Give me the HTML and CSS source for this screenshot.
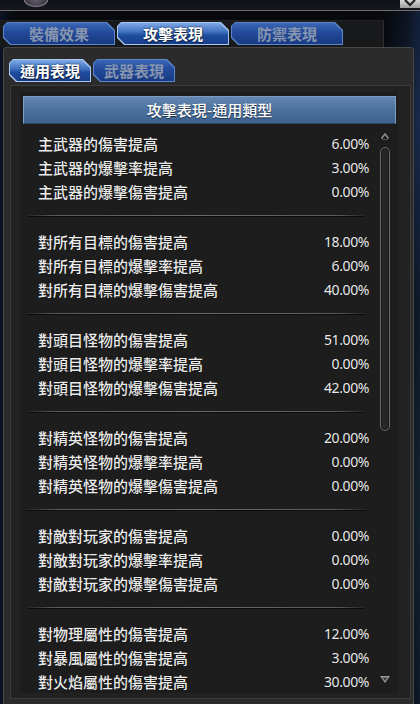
FILE: index.html
```html
<!DOCTYPE html>
<html lang="zh-Hant">
<head>
<meta charset="utf-8">
<title>攻擊表現</title>
<link rel="stylesheet" href="styles.css">
</head>
<body>
<div class="screen">
  <div class="topstrip">
    <div class="orb"></div>
    <div class="closebtn"><svg width="20" height="9" viewBox="0 0 20 9"><path d="M5 0 L10 5 L15 0" stroke="#222" stroke-width="2.2" fill="none"/></svg></div>
  </div>
  <div class="tabbar">
    <div class="tab"><span>裝備效果</span></div>
    <div class="tab active"><span>攻擊表現</span></div>
    <div class="tab"><span>防禦表現</span></div>
  </div>
  <div class="panel">
    <div class="subtabs">
      <div class="tab sub active"><span>通用表現</span></div>
      <div class="tab sub"><span>武器表現</span></div>
    </div>
    <div class="inner">
      <div class="column">
        <div class="header">攻擊表現-通用類型</div>
        <div class="listwrap">
          <div class="list">
            <div class="group">
              <div class="row"><span>主武器的傷害提高</span><span class="val">6.00%</span></div>
              <div class="row"><span>主武器的爆擊率提高</span><span class="val">3.00%</span></div>
              <div class="row"><span>主武器的爆擊傷害提高</span><span class="val">0.00%</span></div>
            </div>
            <div class="sep"></div>
            <div class="group">
              <div class="row"><span>對所有目標的傷害提高</span><span class="val">18.00%</span></div>
              <div class="row"><span>對所有目標的爆擊率提高</span><span class="val">6.00%</span></div>
              <div class="row"><span>對所有目標的爆擊傷害提高</span><span class="val">40.00%</span></div>
            </div>
            <div class="sep"></div>
            <div class="group">
              <div class="row"><span>對頭目怪物的傷害提高</span><span class="val">51.00%</span></div>
              <div class="row"><span>對頭目怪物的爆擊率提高</span><span class="val">0.00%</span></div>
              <div class="row"><span>對頭目怪物的爆擊傷害提高</span><span class="val">42.00%</span></div>
            </div>
            <div class="sep"></div>
            <div class="group">
              <div class="row"><span>對精英怪物的傷害提高</span><span class="val">20.00%</span></div>
              <div class="row"><span>對精英怪物的爆擊率提高</span><span class="val">0.00%</span></div>
              <div class="row"><span>對精英怪物的爆擊傷害提高</span><span class="val">0.00%</span></div>
            </div>
            <div class="sep"></div>
            <div class="group">
              <div class="row"><span>對敵對玩家的傷害提高</span><span class="val">0.00%</span></div>
              <div class="row"><span>對敵對玩家的爆擊率提高</span><span class="val">0.00%</span></div>
              <div class="row"><span>對敵對玩家的爆擊傷害提高</span><span class="val">0.00%</span></div>
            </div>
            <div class="sep"></div>
            <div class="group">
              <div class="row"><span>對物理屬性的傷害提高</span><span class="val">12.00%</span></div>
              <div class="row"><span>對暴風屬性的傷害提高</span><span class="val">3.00%</span></div>
              <div class="row"><span>對火焰屬性的傷害提高</span><span class="val">30.00%</span></div>
            </div>
          </div>
          <div class="scrollbar">
            <svg class="arrow" width="10" height="8" viewBox="0 0 10 8"><path d="M1.5 6.5 L5 2 L8.5 6.5" stroke="#8a8a8a" stroke-width="1.6" fill="none"/><path d="M2 7.5 L8 7.5" stroke="#555" stroke-width="1"/></svg>
            <div class="track"></div>
            <svg class="arrow down" width="12" height="9" viewBox="0 0 12 9"><path d="M1 1 L11 1 L6 8 Z" fill="#9a9a9a"/><path d="M3.5 2.5 L8.5 2.5 L6 6 Z" fill="#3a3a3a"/></svg>
          </div>
        </div>
      </div>
    </div>
  </div>
</div>
</body>
</html>
```
FILE: styles.css
```css
html, body {
  margin: 0;
  padding: 0;
}
body {
  width: 420px;
  height: 704px;
  overflow: hidden;
  background:
    radial-gradient(ellipse 40px 200px at 420px 120px, rgba(40,70,120,0.45), transparent),
    radial-gradient(ellipse 30px 300px at 420px 500px, rgba(30,60,60,0.35), transparent),
    linear-gradient(to right, #0c1424, #07090d 3%, #07090d 97%, #0d1628);
  font-family: "Noto Sans CJK TC", "Noto Sans", sans-serif;
  color: #e8e8e8;
}
.screen {
  display: flex;
  flex-direction: column;
}
.topstrip {
  height: 10px;
  border-bottom: 1px solid #6e6e70;
  display: flex;
  justify-content: space-between;
  align-items: flex-start;
  overflow: hidden;
  background: linear-gradient(#101218, #15171d);
}
.orb {
  width: 22px;
  height: 12px;
  margin-left: 24px;
  margin-top: -7px;
  border-radius: 50%;
  background: radial-gradient(circle at 50% 30%, #6a6470, #2e2a34);
  border: 1px solid #8a8494;
}
.closebtn {
  width: 20px;
  height: 8px;
  background: linear-gradient(#d8d8d8, #9c9c9c);
}
.closebtn svg { display: block; }

.tabbar {
  margin-top: 9px;
  width: 380px;
  height: 25px;
  padding: 1px 0 0 3px;
  display: flex;
  gap: 2px;
  background: #18191b;
  border-right: 1px solid #2e2e30;
  border-top: 1px solid #222;
}
.tab {
  width: 112px;
  height: 23px;
  padding: 1px;
  box-sizing: border-box;
  background: #5b86c9;
  clip-path: polygon(4px 0, calc(100% - 8px) 0, 100% 8px, 100% 100%, 7px 100%, 0 calc(100% - 7px), 0 4px);
}
.tab span {
  display: block;
  height: 100%;
  clip-path: polygon(3px 0, calc(100% - 8px) 0, 100% 8px, 100% 100%, 7px 100%, 0 calc(100% - 7px), 0 3px);
  background: linear-gradient(#3a67b4 0%, #22499a 45%, #183a82 100%);
  color: #8795ae;
  font-size: 15px;
  line-height: 21px;
  text-align: center;
  font-weight: 700;
}
.tab.active {
  background: #a9c8f0;
}
.tab.active span {
  background: linear-gradient(#7ea9e6 0%, #4474c2 40%, #1e4c9e 60%, #1a3f8a 100%);
  color: #ffffff;
  text-shadow: 0 0 2px #0a1a3a, 0 1px 1px #0a1a3a;
}

.panel {
  margin-left: 3px;
  width: 409px;
  height: 680px;
  background: #2b2b2c;
  border: 1px solid #474748;
  border-radius: 3px 3px 0 0;
}
.subtabs {
  display: flex;
  gap: 2px;
  padding: 11px 0 0 5px;
  height: 23px;
}
.tab.sub {
  width: 82px;
}
.inner {
  margin: 3px 0 0 6px;
  width: 401px;
  height: 614px;
  background: #222223;
  border: 1px solid #3c3c3d;
  padding: 6px 12px 5px 9px;
  box-sizing: border-box;
}
.column {
  height: 100%;
  background: #1d1d1e;
  padding-top: 4px;
  box-sizing: border-box;
  display: flex;
  flex-direction: column;
}
.header {
  margin: 0 2px 0 3px;
  height: 28px;
  box-sizing: border-box;
  border: 1px solid #7f9dc0;
  border-bottom-color: #2c4668;
  background: linear-gradient(#6387b2, #4c719e 50%, #3d6290);
  color: #ffffff;
  font-size: 15px;
  font-weight: 500;
  line-height: 25px;
  text-align: center;
  text-shadow: 0 1px 1px #1a2a40;
}
.listwrap {
  flex: 1;
  display: flex;
  overflow: hidden;
}
.list {
  flex: 1;
  padding: 7px 9px 0 18px;
  overflow: hidden;
}
.row {
  height: 24px;
  display: flex;
  justify-content: space-between;
  align-items: center;
  font-size: 15px;
  font-weight: 500;
  color: #ececec;
  text-shadow: 0 0 1px #000;
}
.val {
  font-family: "Noto Sans", "Open Sans", sans-serif;
  font-size: 14px;
  font-weight: 400;
  letter-spacing: -0.4px;
}
.sep {
  height: 1px;
  margin: 12px 4px 12px -11px;
  background: linear-gradient(to right, rgba(60,60,60,0.2), #5a5a5a 8%, #6a6a6a 50%, #5a5a5a 92%, rgba(60,60,60,0.2));
  border-bottom: 1px solid #0c0c0c;
}
.scrollbar {
  width: 20px;
  padding: 8px 0 9px 0;
  display: flex;
  flex-direction: column;
  align-items: flex-start;
}
.arrow {
  display: block;
  margin-left: 2px;
}
.arrow.down {
  margin-top: auto;
  margin-left: 1px;
}
.track {
  margin: 7px 0 0 2px;
  width: 10px;
  height: 284px;
  box-sizing: border-box;
  border: 1px solid #6a6a6a;
  border-radius: 5px;
  background: #262627;
  box-shadow: inset 0 0 0 1px #1a1a1a;
}
```
